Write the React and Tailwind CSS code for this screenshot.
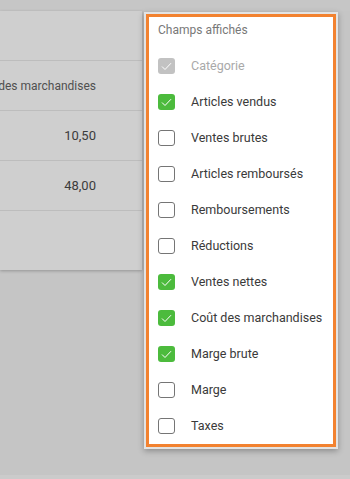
import React from "react";

const items = [
  { label: "Catégorie", state: "disabled" },
  { label: "Articles vendus", state: "on" },
  { label: "Ventes brutes", state: "off" },
  { label: "Articles remboursés", state: "off" },
  { label: "Remboursements", state: "off" },
  { label: "Réductions", state: "off" },
  { label: "Ventes nettes", state: "on" },
  { label: "Coût des marchandises", state: "on" },
  { label: "Marge brute", state: "on" },
  { label: "Marge", state: "off" },
  { label: "Taxes", state: "off" },
];

function Box({ state }) {
  if (state === "off") {
    return <div className="w-[17px] h-[16px] rounded-[3px] border border-[#757575] bg-white shrink-0" />;
  }
  const bg = state === "on" ? "bg-[#4cbb3d]" : "bg-[#c2c2c2]";
  return (
    <div className={`w-[17px] h-[16px] rounded-[3px] ${bg} shrink-0 flex items-center justify-center`}>
      <svg width="11" height="9" viewBox="0 0 11 9" fill="none">
        <path d="M1 4.5 L4 7.5 L10 1.2" stroke="white" strokeWidth="1" />
      </svg>
    </div>
  );
}

export default function App() {
  return (
    <div
      className="relative w-[350px] h-[479px] overflow-hidden bg-[#c5c5c5]"
      style={{ fontFamily: "Roboto, 'Liberation Sans', sans-serif" }}
    >
      <div className="h-[11px] bg-[#c6c6c6]" />
      <div className="w-[142px] h-[259px] bg-[#cfcfcf] shadow-[0_1px_3px_rgba(0,0,0,0.25)] flex flex-col">
        <div className="h-[50px] border-b border-[#bdbdbd]" />
        <div className="h-[50px] border-b border-[#bdbdbd] flex items-center justify-end pr-[46px] text-[12px] text-[#505050] whitespace-nowrap">
          des marchandises
        </div>
        <div className="h-[50px] border-b border-[#bdbdbd] flex items-center justify-end pr-[46px] text-[13px] text-[#3c3c3c]">
          10,50
        </div>
        <div className="h-[50px] border-b border-[#bdbdbd] flex items-center justify-end pr-[46px] text-[13px] text-[#3c3c3c]">
          48,00
        </div>
        <div className="flex-1" />
      </div>
      <div className="absolute bottom-0 left-0 right-0 h-[4px] bg-[#cbcbcb]" />

      <div className="absolute left-[144px] top-[12px] w-[194px] h-[437px] bg-[#e3e3e3] p-[2px] shadow-[0_2px_6px_rgba(0,0,0,0.3)]">
        <div className="w-full h-full border-[3px] border-[#f28230] bg-white pl-[9px] pt-[5px]">
          <div className="text-[12px] text-[#787878] leading-[16px] h-[26px]">Champs affichés</div>
          <div className="flex flex-col">
            {items.map((it) => (
              <div key={it.label} className="h-[36px] flex items-center gap-[16px]">
                <Box state={it.state} />
                <span className={`text-[12.5px] ${it.state === "disabled" ? "text-[#a9a9a9]" : "text-[#3a3a3a]"}`}>
                  {it.label}
                </span>
              </div>
            ))}
          </div>
        </div>
      </div>
    </div>
  );
}
